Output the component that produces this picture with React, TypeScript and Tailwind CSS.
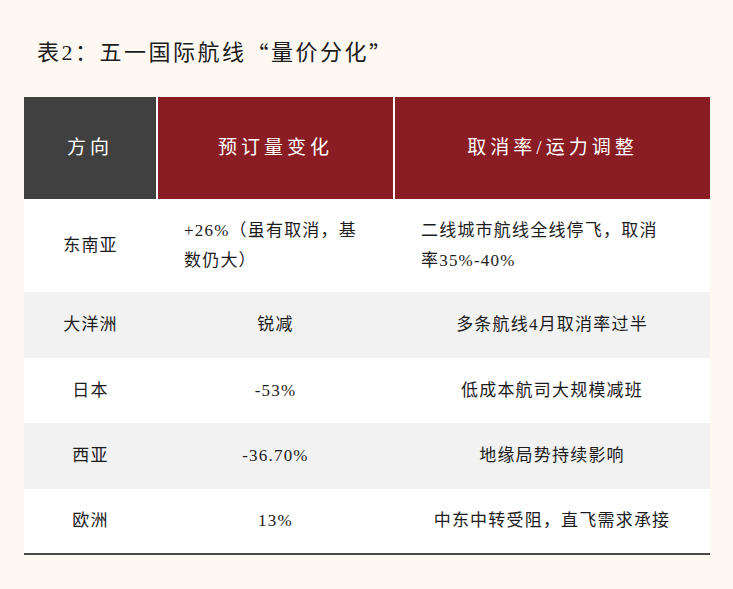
import React from 'react';

const rows = [
  { region: '东南亚', change: ['+26%（虽有取消，基', '数仍大）'], note: ['二线城市航线全线停飞，取消', '率35%-40%'], h: 'h-[93px]', bg: 'bg-white' },
  { region: '大洋洲', change: ['锐减'], note: ['多条航线4月取消率过半'], h: 'h-[66px]', bg: 'bg-[#f2f2f2]' },
  { region: '日本', change: ['-53%'], note: ['低成本航司大规模减班'], h: 'h-[65px]', bg: 'bg-white' },
  { region: '西亚', change: ['-36.70%'], note: ['地缘局势持续影响'], h: 'h-[66px]', bg: 'bg-[#f2f2f2]' },
  { region: '欧洲', change: ['13%'], note: ['中东中转受阻，直飞需求承接'], h: 'h-[64px]', bg: 'bg-white' },
];

const font = { fontFamily: '"Liberation Serif", "Noto Sans CJK SC", serif' };
const cjk = { fontFamily: '"Noto Sans CJK SC", sans-serif' };

function Cell({ lines }: { lines: string[] }) {
  if (lines.length > 1) {
    return (
      <div className="flex items-center px-[27px]">
        <div className="text-left leading-[30px] whitespace-nowrap">
          {lines.map((l) => (
            <div key={l}>{l}</div>
          ))}
        </div>
      </div>
    );
  }
  return <div className="flex items-center justify-center whitespace-nowrap">{lines[0]}</div>;
}

export default function App() {
  return (
    <div className="w-[733px] h-[589px] bg-[#fdf8f2] text-[#1c1c1c]" style={font}>
      <div className="h-[97px] pt-[38px] pl-[37px]">
        <div className="h-[28px] flex items-center text-[22px] tracking-[2.5px] whitespace-nowrap">
          表2：五一国际航线<span style={cjk}>“</span>量价分化<span style={cjk}>”</span>
        </div>
      </div>
      <div className="ml-[24px] w-[686px]">
        <div className="grid grid-cols-[132px_235px_315px] gap-x-[2px] bg-white h-[102px] text-white text-[19px] tracking-[4px]">
          <div className="bg-[#404040] flex items-center justify-center">方向</div>
          <div className="bg-[#8a1c23] flex items-center justify-center">预订量变化</div>
          <div className="bg-[#8a1c23] flex items-center justify-center">取消率/运力调整</div>
        </div>
        <div className="border-b-2 border-[#4a4a4a] text-[17px] tracking-[1.2px]">
          {rows.map((r) => (
            <div key={r.region} className={`grid grid-cols-[133px_237px_316px] ${r.h} ${r.bg}`}>
              <div className="flex items-center justify-center">{r.region}</div>
              <Cell lines={r.change} />
              <Cell lines={r.note} />
            </div>
          ))}
        </div>
      </div>
    </div>
  );
}
